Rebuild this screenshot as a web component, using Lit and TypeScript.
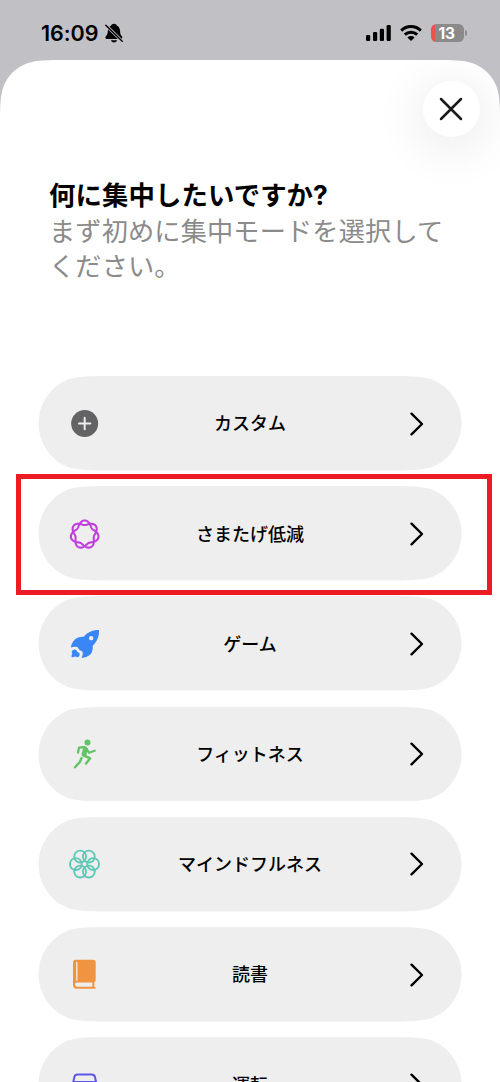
import { LitElement, html, css, svg, type SVGTemplateResult } from 'lit';
import { customElement, property } from 'lit/decorators.js';

interface FocusMode {
  id: string;
  label: string;
  highlighted?: boolean;
}

const MODES: FocusMode[] = [
  { id: 'custom', label: 'カスタム' },
  { id: 'reduce', label: 'さまたげ低減', highlighted: true },
  { id: 'gaming', label: 'ゲーム' },
  { id: 'fitness', label: 'フィットネス' },
  { id: 'mindfulness', label: 'マインドフルネス' },
  { id: 'reading', label: '読書' },
  { id: 'driving', label: '運転' },
];

// Closed seven-lobed curve that winds twice around the centre.
function rosette(cx: number, cy: number, mean: number, swing: number): string {
  const steps = 280;
  let d = '';
  for (let i = 0; i < steps; i++) {
    const t = (i / steps) * Math.PI * 4;
    const r = mean + swing * Math.cos(3.5 * t);
    const x = cx + r * Math.sin(t);
    const y = cy - r * Math.cos(t);
    d += `${i ? 'L' : 'M'}${x.toFixed(2)} ${y.toFixed(2)}`;
  }
  return d + 'Z';
}

const ICONS: Record<string, SVGTemplateResult> = {
  custom: svg`
    <circle cx="74" cy="76.500" r="40.500" fill="#636365"/>
    <path d="M74 59.500V93.500M57 76.500H91" stroke="#eeeeef" stroke-width="6" stroke-linecap="round"/>`,
  reduce: svg`
    <path d="${rosette(74, 76.5, 35.2, 7)}" fill="none" stroke="#c03edb" stroke-width="6.2" stroke-linejoin="round"/>`,
  gaming: svg`
    <g transform="translate(0 3.3)">
      <path fill="#3a86f7" fill-rule="evenodd" d="M117 30C99 29 83 36 71 50C58 49 46 53 39 65C35 71 33 77 33 82C39 79 47 79 52 81C55 84 56 88 60 91C65 92 68 93 68 97C69 103 67 108 64 113C77 113 89 107 95 97C98 90 99 84 98 77C111 66 118 48 117 30ZM93.500 47.500A6.600 6.600 0 1 1 93.500 60.700A6.600 6.600 0 1 1 93.500 47.500Z"/>
      <path fill="#3a86f7" d="M39 90C43 87 47 88 50 91C51 95 54 97 57 98C60 102 60 106 56 110C52 113 48 109 45 109C41 109 38 113 34 111C36 107 34 103 37 100C34 98 35 93 39 90Z"/>
    </g>`,
  fitness: svg`
    <g transform="translate(0 2.7)" stroke="#62c466" stroke-linecap="round" stroke-linejoin="round" fill="none">
      <circle cx="82.500" cy="37.500" r="9" fill="#62c466" stroke="none"/>
      <path d="M54 68L57 53.500L74 52" stroke-width="6.800"/>
      <path d="M78 55L87 68.500L104 62.500" stroke-width="6.800"/>
      <path d="M64 51H75Q81 51 83 56L78 76L82 82L69 80Q64 77 66 71L70 55Z" fill="#62c466" stroke-width="2"/>
      <path d="M73 77L90 85.500L78 101" stroke-width="7.400"/>
      <path d="M64.500 85L59 97L45 112" stroke-width="7.400"/>
    </g>`,
  mindfulness: svg`
    <g transform="translate(0 1.8)" fill="none" stroke="#5cc9b6" stroke-width="5.600">
      ${[0, 60, 120, 180, 240, 300].map((a) => {
        const r = (a * Math.PI) / 180;
        return svg`<circle cx="${73.5 + 26 * Math.cos(r)}" cy="${73.5 + 26 * Math.sin(r)}" r="17.8"/>`;
      })}
    </g>`,
  reading: svg`
    <g transform="translate(0 2)">
      <path fill="#f19441" fill-rule="evenodd" d="M48 30H99Q107 30 107 38V91Q107 95 103 97V111Q107 111 107 114Q107 117 104 117H50Q39 117 39 106V39Q39 30 48 30ZM48.500 37V93H52.500V37ZM51 98.500Q45 98.500 45 104.500Q45 111 51 111H97V98.500Z"/>
    </g>`,
  driving: svg`
    <g fill="none" stroke="#5e56e8" stroke-width="6" stroke-linejoin="round">
      <path d="M38 76L43 51Q45 43.500 53 43.500H95Q103 43.500 105 51L110 76"/>
      <path d="M42 66H106M38 72H110V104H38Z"/>
    </g>`,
};

@customElement('status-bar')
class StatusBar extends LitElement {
  static styles = css`
    :host {
      display: flex;
      align-items: flex-start;
      justify-content: space-between;
      box-sizing: border-box;
      height: 60px;
      padding: 20px 33.5px 0 41px;
      font-family: 'Inter', sans-serif;
      color: #000;
    }
    .left,
    .right {
      display: flex;
      align-items: center;
      height: 26px;
    }
    .time {
      font-size: 21.5px;
      font-weight: 600;
      line-height: 27px;
      width: 64px;
      letter-spacing: -0.05px;
      white-space: nowrap;
    }
    .signal {
      margin-right: 9px;
    }
    .wifi {
      margin-right: 9px;
    }
    .battery {
      display: flex;
      align-items: center;
      gap: 1px;
    }
    .cell {
      width: 32.5px;
      height: 18px;
      border-radius: 5.5px;
      background: linear-gradient(90deg, #f04f4a 4.5px, #8a8a8b 4.5px);
      color: #fff;
      font-size: 15.5px;
      font-weight: 700;
      line-height: 19px;
      text-align: center;
      text-indent: -1px;
    }
    .nub {
      width: 2px;
      height: 6px;
      border-radius: 0 2px 2px 0;
      background: #8f8f91;
    }
    svg {
      display: block;
    }
  `;

  render() {
    return html`
      <div class="left">
        <span class="time">16:09</span>
        <svg width="18" height="20" viewBox="0 0 18 20">
          <path d="M9 .8C7.600 .8 6.500 1.600 6.200 2.500C3.800 3.700 2.900 5.800 2.800 8.500C2.700 11 2.100 12 .9 13.200C-.1 14.300 .2 15.900 1.900 15.900H15.800C17.500 15.900 17.800 14.300 16.800 13.200C15.600 12 15.200 11 15.100 8.500C15 5.800 14.100 3.700 11.800 2.500C11.500 1.600 10.400 .8 9 .8ZM6 17.200H12C11.700 18.500 10.600 19.400 9 19.400S6.300 18.500 6 17.200Z" fill="#000"/>
          <path d="M.2 1.600L17.500 18.500" stroke="#c1c0c5" stroke-width="3"/>
          <path d="M.8 2.200L17.200 18.200" stroke="#000" stroke-width="1.400" stroke-linecap="round"/>
        </svg>
      </div>
      <div class="right">
        <svg class="signal" width="25" height="16" viewBox="0 0 25 16">
          <rect x="0" y="10" width="4.200" height="6" rx="1.300"/>
          <rect x="7" y="7" width="4.200" height="9" rx="1.300"/>
          <rect x="13.800" y="3.700" width="4.200" height="12.300" rx="1.300"/>
          <rect x="20.600" y="0" width="4.200" height="16" rx="1.300"/>
        </svg>
        <svg class="wifi" width="22" height="16" viewBox="0 0 22 16">
          <path d="M1.200 5.600A14 14 0 0 1 20.800 5.600" fill="none" stroke="#000" stroke-width="3"/>
          <path d="M4.800 9.700A9 9 0 0 1 17.200 9.700" fill="none" stroke="#000" stroke-width="3"/>
          <path d="M7.400 12.500A5.200 5.200 0 0 1 14.600 12.500L11 16Z"/>
        </svg>
        <div class="battery">
          <div class="cell">13</div>
          <div class="nub"></div>
        </div>
      </div>
    `;
  }
}

@customElement('focus-row')
class FocusRow extends LitElement {
  @property({ attribute: false }) mode!: FocusMode;

  static styles = css`
    :host {
      display: block;
    }
    .row {
      position: relative;
      display: grid;
      grid-template-columns: 92px 1fr 92px;
      align-items: center;
      width: 424px;
      height: 94.6px;
    }
    .shape {
      position: absolute;
      inset: 0;
      width: 100%;
      height: 100%;
    }
    .icon,
    .label,
    .chevron {
      position: relative;
    }
    .icon {
      display: block;
      margin-left: 22px;
    }
    .label {
      padding-top: 2px;
      text-align: center;
      font-size: 18px;
      font-weight: 500;
      line-height: 26px;
      color: #000;
    }
    .chevron {
      display: block;
      margin: 0.5px 0 0 39px;
    }
    .marker {
      position: absolute;
      left: -22px;
      top: -12.3px;
      box-sizing: border-box;
      width: 476px;
      height: 121px;
      border: 5px solid #ed1c24;
      z-index: 2;
    }
  `;

  render() {
    return html`
      <div class="row">
        <svg class="shape" viewBox="-0.5 0 424 94.6" preserveAspectRatio="none">
          <path fill="#eeeeee" d="M0 47.300A47.300 47.300 0 0 1 28.200 4C35 1.200 46 0 68 0H355C377 0 388 1.200 394.800 4A47.300 47.300 0 0 1 394.800 90.600C388 93.400 377 94.600 355 94.600H68C46 94.600 35 93.400 28.200 90.600A47.300 47.300 0 0 1 0 47.300Z"/>
        </svg>
        <svg class="icon" width="50" height="50" viewBox="0 0 150 150">${ICONS[this.mode.id]}</svg>
        <span class="label">${this.mode.label}</span>
        <svg class="chevron" width="16" height="24" viewBox="0 0 16 24">
          <path d="M2.500 1.700L13 12L2.500 22.300" fill="none" stroke="#000" stroke-width="2.400" stroke-linecap="round" stroke-linejoin="round"/>
        </svg>
        ${this.mode.highlighted ? html`<div class="marker"></div>` : null}
      </div>
    `;
  }
}

@customElement('app-root')
class AppRoot extends LitElement {
  static styles = css`
    :host {
      display: block;
      width: 500px;
      height: 1082px;
      overflow: hidden;
      background: #c1c0c5;
      font-family: 'Inter', 'Noto Sans CJK JP', sans-serif;
    }
    .sheet {
      box-sizing: border-box;
      height: 1022px;
      padding-top: 20.500px;
      overflow: hidden;
      background: #fff;
      clip-path: path(
        'M0 65.7C0 46.8 0 37.3 3.2 27.2C7.3 16 16 7.300 27.2 3.2C37.3 0 46.8 0 65.7 0H434.3C453.2 0 462.7 0 472.8 3.2C484 7.300 492.700 16 496.8 27.2C500 37.3 500 46.8 500 65.7V1022H0Z'
      );
    }
    .close {
      display: grid;
      place-items: center;
      width: 56.5px;
      height: 56.5px;
      margin: 0 20.5px 0 auto;
      padding: 0;
      border: 0;
      border-radius: 50%;
      background: #fff;
      box-shadow: 0 8px 50px 4px rgba(0, 0, 0, 0.09);
    }
    .intro {
      margin: 41px 48px 0 49px;
      font-size: 26.2px;
      line-height: 35.7px;
    }
    .title {
      margin: 0;
      font-size: 26.4px;
      font-weight: 700;
      letter-spacing: 0.1px;
      color: #000;
    }
    .text {
      margin: 0;
      color: #8b8b8b;
      letter-spacing: 0.15px;
      white-space: nowrap;
    }
    .list {
      display: flex;
      flex-direction: column;
      gap: 15.65px;
      margin: 90.900px 0 0 38px;
    }
  `;

  render() {
    return html`
      <status-bar></status-bar>
      <main class="sheet">
        <button class="close" aria-label="閉じる">
          <svg width="24" height="24" viewBox="0 0 24 24">
            <path d="M2 2L22 22M22 2L2 22" stroke="#1b1b1d" stroke-width="2.500" stroke-linecap="round"/>
          </svg>
        </button>
        <div class="intro">
          <h1 class="title">何に集中したいですか?</h1>
          <p class="text">まず初めに集中モードを選択して<br />ください。</p>
        </div>
        <div class="list">
          ${MODES.map((mode) => html`<focus-row .mode=${mode}></focus-row>`)}
        </div>
      </main>
    `;
  }
}
